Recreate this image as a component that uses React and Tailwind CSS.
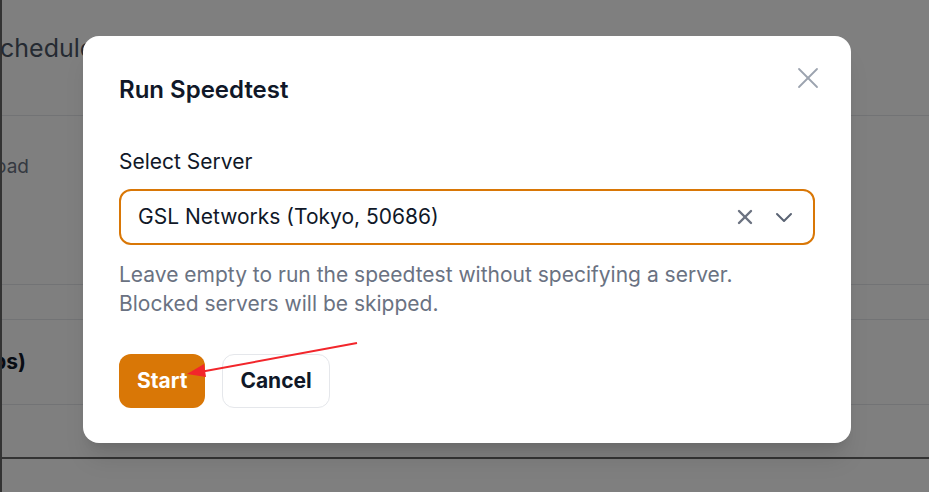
import React from 'react';

function CloseIcon() {
  return (
    <svg width="22" height="22" viewBox="0 0 22 22" fill="none" stroke="#9ca3af" strokeWidth="1.8" strokeLinecap="round">
      <line x1="2" y1="2" x2="20" y2="20" />
      <line x1="20" y1="2" x2="2" y2="20" />
    </svg>
  );
}

function ClearIcon() {
  return (
    <svg width="16" height="16" viewBox="0 0 16 16" fill="none" stroke="#6b7280" strokeWidth="2.4" strokeLinecap="round">
      <line x1="2" y1="2" x2="14" y2="14" />
      <line x1="14" y1="2" x2="2" y2="14" />
    </svg>
  );
}

function ChevronIcon() {
  return (
    <svg width="18" height="12" viewBox="0 0 18 12" fill="none" stroke="#5b6474" strokeWidth="2" strokeLinecap="round" strokeLinejoin="round">
      <polyline points="2,3 9,10 16,3" />
    </svg>
  );
}

function Arrow() {
  return (
    <svg className="absolute left-0 top-0 pointer-events-none" width="929" height="492" viewBox="0 0 929 492">
      <line x1="357" y1="343" x2="200" y2="372" stroke="#f2262b" strokeWidth="2" />
      <polygon points="187,374 204,364 206,377" fill="#f2262b" />
    </svg>
  );
}

export default function App() {
  return (
    <div className="relative w-[929px] h-[492px] overflow-hidden bg-white" style={{ fontFamily: 'Inter, "Noto Sans", sans-serif' }}>
      {/* Page behind the dialog */}
      <div className="flex flex-col h-full border-l-2 border-[#666]">
        <div className="h-[116px] border-b border-gray-200 flex items-start pt-[30px]">
          <span className="ml-[-18px] text-[25px] text-gray-600 whitespace-nowrap">Schedule</span>
        </div>
        <div className="h-[169px] border-b border-gray-200 flex items-start pt-[37px]">
          <div className="w-[27px] flex justify-end overflow-hidden whitespace-nowrap text-[19px] text-gray-500">Upload</div>
        </div>
        <div className="h-[35px] border-b border-gray-200"></div>
        <div className="h-[85px] border-b border-gray-200 flex items-center">
          <div className="w-[24px] flex justify-end overflow-hidden whitespace-nowrap text-[21px] font-bold text-gray-900">(Mbps)</div>
        </div>
        <div className="h-[54px] border-b-2 border-[#666]"></div>
        <div className="flex-1"></div>
      </div>

      {/* Overlay */}
      <div className="absolute inset-0 bg-black/50 pl-[83px] pt-[36px]">
        <div className="relative w-[768px] bg-white rounded-2xl shadow-xl px-9 pt-[38px] pb-[35px]">
          <button className="absolute right-[32px] top-[31px]">
            <CloseIcon />
          </button>
          <h2 className="text-[24px] leading-[32px] font-semibold text-gray-900">Run Speedtest</h2>

          <label className="block mt-[41px] text-[21px] leading-[29px] text-gray-900">Select Server</label>
          <div className="mt-[13px] h-[56px] rounded-xl border-[2.5px] border-[#d97706] flex items-center pl-[17px] pr-[20px]">
            <span className="flex-1 text-[21px] text-gray-900">GSL Networks (Tokyo, 50686)</span>
            <ClearIcon />
            <span className="ml-[22px]"><ChevronIcon /></span>
          </div>
          <p className="mt-[15px] text-[21px] leading-[29px] text-gray-500">
            Leave empty to run the speedtest without specifying a server.
            <br />
            Blocked servers will be skipped.
          </p>

          <div className="mt-[36px] flex gap-[17px]">
            <button className="h-[54px] px-[18px] rounded-xl bg-[#d97706] text-white text-[21px] font-bold">Start</button>
            <button className="h-[54px] px-[17px] rounded-xl border-[1.5px] border-gray-200 bg-white text-gray-900 text-[21px] font-bold">Cancel</button>
          </div>
        </div>
      </div>

      <Arrow />
    </div>
  );
}
